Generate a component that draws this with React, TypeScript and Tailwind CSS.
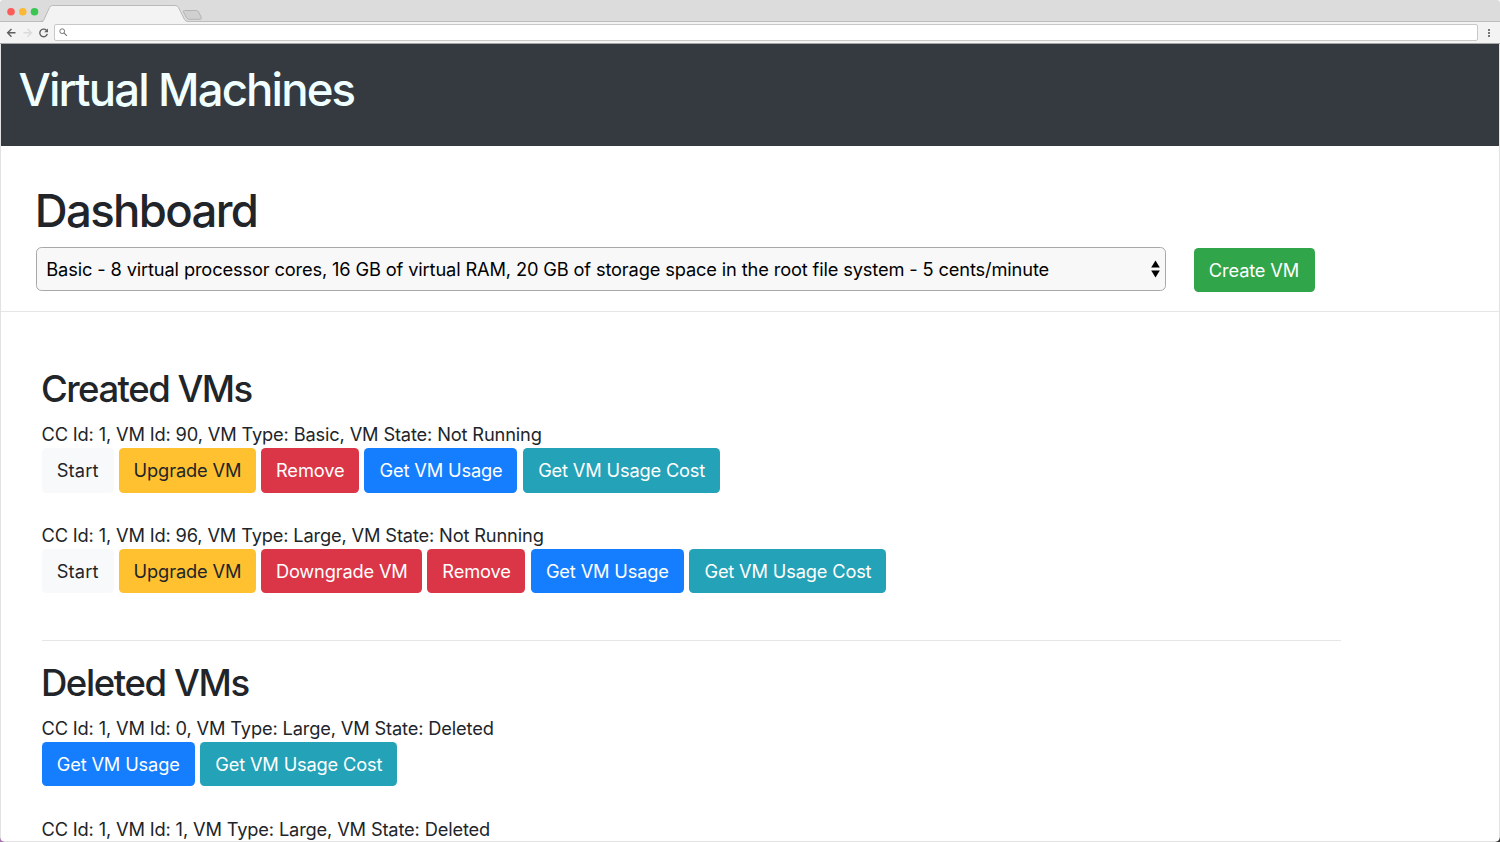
import type { ReactNode } from "react";

type Action = { label: string; className: string };

const START: Action = { label: "Start", className: "w-[72px] bg-[#f8f9fa] text-[#212529] tracking-[0.15px]" };
const UPGRADE: Action = { label: "Upgrade VM", className: "w-[137px] bg-[#ffc12f] text-[#212529] tracking-[-0.12px]" };
const DOWNGRADE: Action = { label: "Downgrade VM", className: "w-[161px] bg-[#db3647] text-white tracking-[-0.18px]" };
const REMOVE: Action = { label: "Remove", className: "w-[98px] bg-[#db3647] text-white tracking-[-0.1px]" };
const USAGE: Action = { label: "Get VM Usage", className: "w-[153px] bg-[#147efe] text-white tracking-[-0.16px]" };
const COST: Action = { label: "Get VM Usage Cost", className: "w-[197.5px] bg-[#24a2b7] text-white tracking-[-0.17px]" };

function Row({ text, actions, className }: { text: string; actions: Action[]; className: string }) {
  return (
    <div className={className}>
      <p className="h-[23px] text-[18.25px] leading-[23px] tracking-[-0.155px] whitespace-nowrap">{text}</p>
      {actions.length > 0 && (
        <div className="mt-[2px] flex gap-[5.3px]">
          {actions.map((a) => (
            <button
              key={a.label}
              className={`flex h-[44.5px] shrink-0 items-center justify-center rounded-[4.5px] pt-[1.5px] pl-[0.4px] text-[18.25px] whitespace-nowrap ${a.className}`}
            >
              {a.label}
            </button>
          ))}
        </div>
      )}
    </div>
  );
}

function SectionTitle({ children, className }: { children: ReactNode; className: string }) {
  return <h2 className={`h-[44px] text-[36.5px] leading-[44px] font-medium whitespace-nowrap ${className}`}>{children}</h2>;
}

function BrowserChrome() {
  return (
    <div className="flex h-[44px] shrink-0 flex-col">
      <div className="h-[22px] bg-[#dcdcdc]">
        <svg width="1500" height="22" viewBox="0 0 1500 22" fill="none">
          <path d="M0 21.5H1500" stroke="#bdbdbd" />
          <path d="M43 22 L49.5 7.5 Q50.5 5.5 52.5 5.5 H175 Q177.5 5.5 178.5 7.5 L184.5 19.5 Q185.5 21.5 188 21.5 V22 Z" fill="#f3f3f3" />
          <path d="M40 21.5 Q43 21.5 44 19.5 L49.5 7.5 Q50.5 5.5 52.5 5.5 H175 Q177.5 5.5 178.5 7.5 L184.5 19.5 Q185.5 21.5 188 21.5" stroke="#b9b9b9" />
          <path d="M184.5 10.5 H196.5 Q198 10.5 198.7 12 L201.3 17.5 Q201.8 19.3 200 19.3 H189 Q187.5 19.3 186.8 18 L183.5 12 Q183 10.5 184.5 10.5Z" fill="#d0d0d0" stroke="#b5b5b5" />
          <circle cx="11" cy="11.8" r="3.8" fill="#fc5b57" />
          <circle cx="22.8" cy="11.8" r="3.8" fill="#f9b936" />
          <circle cx="34.5" cy="11.8" r="3.8" fill="#3bc551" />
        </svg>
      </div>
      <div className="flex h-[22px] items-center border-b border-[#a5a6a8] bg-[#f3f3f3]">
        <svg width="54" height="21" viewBox="0 0 54 21" fill="none" strokeWidth="1.4" className="shrink-0">
          <path d="M15.5 10.8 H7.8 M11.5 6.9 L7.6 10.8 L11.5 14.7" stroke="#5f5f5f" />
          <path d="M23.5 10.8 H31 M27.5 6.9 L31.4 10.8 L27.5 14.7" stroke="#dadada" />
          <path d="M46.4 8.3 A3.8 3.8 0 1 0 47.3 11.9" stroke="#5f5f5f" />
          <path d="M48 6.4 V10.2 H44.2 Z" fill="#5f5f5f" />
        </svg>
        <div className="flex h-[17px] w-[1424px] shrink-0 items-center rounded-[2px] border border-[#c8c8c8] bg-white pl-[3.5px]">
          <svg width="9" height="9" viewBox="0 0 9 9" fill="none" stroke="#777" strokeWidth="1">
            <circle cx="3.2" cy="3.2" r="2.4" />
            <path d="M4.9 4.9 L7.9 7.9" strokeWidth="1.2" />
          </svg>
        </div>
        <svg width="22" height="21" viewBox="0 0 22 21" fill="#777" className="shrink-0">
          <rect x="10" y="7" width="2" height="2" />
          <rect x="10" y="10" width="2" height="2" />
          <rect x="10" y="13" width="2" height="2" />
        </svg>
      </div>
    </div>
  );
}

export default function App() {
  return (
    <div className="relative flex h-[842px] w-[1500px] flex-col overflow-hidden bg-white font-['Inter','Liberation_Sans',sans-serif] text-[#212529]">
      <BrowserChrome />
      <div className="flex min-h-0 flex-1 flex-col overflow-hidden border-x border-b border-[#e2e2e2]">
        <header className="h-[102px] shrink-0 bg-[#353a41] pt-[18px] pl-[17.5px]">
          <h1 className="h-[56px] text-[45.5px] leading-[56px] font-medium tracking-[-1.86px] whitespace-nowrap text-[#f0ffff]">
            Virtual Machines
          </h1>
        </header>
        <section className="h-[166px] shrink-0 border-b border-[#e6e6e6] pt-[37px] pl-[35px]">
          <h1 className="-ml-[1.2px] h-[56px] text-[45.5px] leading-[56px] font-medium tracking-[-1.66px] whitespace-nowrap">Dashboard</h1>
          <div className="mt-[8px] flex items-start">
            <div className="flex h-[44px] w-[1129.5px] items-center justify-between rounded-[5.5px] border border-[#a8a8a8] bg-[#f8f8f8] pr-[5px] pl-[9.3px] text-[18.25px] tracking-[-0.142px] whitespace-nowrap text-black">
              <span className="pt-[1px]">
                Basic - 8 virtual processor cores, 16 GB of virtual RAM, 20 GB of storage space in the root file system - 5 cents/minute
              </span>
              <svg width="9" height="18" viewBox="0 0 9 18" fill="#000" className="shrink-0">
                <path d="M4.5 0.5 L8.8 7.5 H0.2 Z" />
                <path d="M4.5 17.5 L8.8 10.5 H0.2 Z" />
              </svg>
            </div>
            <button className="mt-[1px] ml-[28px] flex h-[44px] w-[121px] items-center justify-center rounded-[4.5px] bg-[#31a549] pt-[1.5px] text-[18.25px] tracking-[-0.15px] whitespace-nowrap text-white">
              Create VM
            </button>
          </div>
        </section>
        <main className="w-[1340px] shrink-0 pt-[55px] pl-[40.5px]">
          <SectionTitle className="-ml-[0.6px] tracking-[-1.5px]">Created VMs</SectionTitle>
          <Row className="mt-[12px]" text="CC Id: 1, VM Id: 90, VM Type: Basic, VM State: Not Running" actions={[START, UPGRADE, REMOVE, USAGE, COST]} />
          <Row
            className="mt-[31px]"
            text="CC Id: 1, VM Id: 96, VM Type: Large, VM State: Not Running"
            actions={[START, UPGRADE, DOWNGRADE, REMOVE, USAGE, COST]}
          />
          <hr className="mt-[47px] border-[#e6e6e6]" />
          <SectionTitle className="mt-[20px] -ml-[0.6px] tracking-[-1.38px]">Deleted VMs</SectionTitle>
          <Row className="mt-[11.5px]" text="CC Id: 1, VM Id: 0, VM Type: Large, VM State: Deleted" actions={[USAGE, COST]} />
          <Row className="mt-[31.8px]" text="CC Id: 1, VM Id: 1, VM Type: Large, VM State: Deleted" actions={[]} />
        </main>
      </div>
      <svg className="absolute bottom-0 left-0" width="5" height="5" viewBox="0 0 5 5">
        <path d="M0 0 Q0.5 4.5 5 5 H0Z" fill="#a86fb0" />
      </svg>
      <svg className="absolute right-0 bottom-0" width="5" height="5" viewBox="0 0 5 5">
        <path d="M5 0 Q4.5 4.5 0 5 H5Z" fill="#333" />
      </svg>
      <svg className="absolute top-0 right-0" width="3" height="3" viewBox="0 0 3 3">
        <path d="M0 0 Q3 0 3 3 V0Z" fill="#fff" />
      </svg>
      <svg className="absolute top-0 left-0" width="3" height="3" viewBox="0 0 3 3">
        <path d="M3 0 Q0 0 0 3 V0Z" fill="#fff" />
      </svg>
    </div>
  );
}
